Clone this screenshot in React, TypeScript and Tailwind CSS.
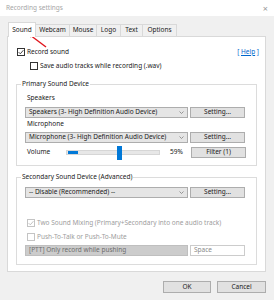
import React from "react";

function Check({ checked, disabled }: { checked?: boolean; disabled?: boolean }) {
  const c = disabled ? "#bcbcbc" : "#333333";
  return (
    <span
      className={`flex h-[8px] w-[8px] shrink-0 items-center justify-center border bg-white ${
        disabled ? "border-[#c4c4c4]" : "border-[#333333]"
      }`}
    >
      {checked && (
        <svg width="6" height="6" viewBox="0 0 6 6">
          <path d="M0.6 3.1 L2.3 4.8 L5.4 1.2" fill="none" stroke={c} strokeWidth="0.9" />
        </svg>
      )}
    </span>
  );
}

function Combo({ text, disabled }: { text: string; disabled?: boolean }) {
  return (
    <div
      className={`flex h-[11px] w-[163px] items-center justify-between border pl-[3px] pr-[3px] ${
        disabled ? "border-[#bfbfbf] bg-[#cccccc] text-[#6d6d6d]" : "border-[#adadad] bg-[#e5e5e5]"
      }`}
    >
      <span className="whitespace-nowrap leading-none">{text}</span>
      {!disabled && (
        <svg width="5" height="3" viewBox="0 0 5 3">
          <path d="M0.5 0.5 L2.5 2.5 L4.5 0.5" fill="none" stroke="#808080" strokeWidth="0.8" />
        </svg>
      )}
    </div>
  );
}

function Btn({ text, w = "w-[55px]" }: { text: string; w?: string }) {
  return (
    <div
      className={`flex h-[11px] ${w} items-center justify-center border border-[#adadad] bg-[#e1e1e1] leading-none`}
    >
      {text}
    </div>
  );
}

function Tab({ label, w, active }: { label: string; w: string; active?: boolean }) {
  return active ? (
    <div
      className={`relative z-10 -mb-px flex h-[15px] ${w} items-center justify-center border border-b-0 border-[#d9d9d9] bg-white leading-none`}
    >
      {label}
    </div>
  ) : (
    <div
      className={`flex h-[12px] ${w} items-center justify-center border border-l-0 border-b-0 border-[#d9d9d9] bg-[#f0f0f0] leading-none`}
    >
      {label}
    </div>
  );
}

export default function App() {
  return (
    <div className="relative flex h-[300px] w-[274px] flex-col overflow-hidden bg-[#f0f0f0] font-['Noto_Sans',sans-serif] text-[6.5px] text-[#1a1a1a]">
      {/* Title bar */}
      <div className="flex h-[16px] items-center justify-between bg-white pl-[6px] pr-[6px] text-[#a6a6a6]">
        <span className="leading-none">Recording settings</span>
        <span className="text-[9px] leading-none text-[#9a9a9a]">×</span>
      </div>

      <div className="flex flex-col px-[7px] pt-[6px]">
        {/* Tabs */}
        <div className="flex h-[14px] items-end pl-[1px]">
          <Tab label="Sound" w="w-[28px]" active />
          <Tab label="Webcam" w="w-[34px]" />
          <Tab label="Mouse" w="w-[27px]" />
          <Tab label="Logo" w="w-[24px]" />
          <Tab label="Text" w="w-[22px]" />
          <Tab label="Options" w="w-[34px]" />
        </div>

        {/* Panel */}
        <div className="flex h-[236px] w-[259px] flex-col border border-[#d9d9d9] bg-white">
          <div className="mt-[10px] flex h-[10px] items-center justify-between pl-[9px] pr-[6px]">
            <div className="flex items-center gap-[2px]">
              <Check checked />
              <span className="leading-none">Record sound</span>
            </div>
            <span className="leading-none text-[#0066cc]">
              [ <span className="underline">Help</span> ]
            </span>
          </div>

          <div className="mt-[4px] flex h-[10px] items-center gap-[2px] pl-[22px]">
            <Check />
            <span className="leading-none">Save audio tracks while recording (.wav)</span>
          </div>

          {/* Primary group */}
          <div className="ml-[8px] mt-[13px] flex h-[82px] w-[241px] flex-col border border-[#dcdcdc]">
            <div className="-mt-[5px] ml-[4px] flex h-[9px] w-fit items-center bg-white px-[1px] leading-none">
              Primary Sound Device
            </div>
            <div className="ml-[10px] mt-[5px] flex h-[9px] items-center leading-none">Speakers</div>
            <div className="ml-[8px] mt-[4px] flex gap-[2px]">
              <Combo text="Speakers (3- High Definition Audio Device)" />
              <Btn text="Setting..." />
            </div>
            <div className="ml-[10px] mt-[2px] flex h-[9px] items-center leading-none">Microphone</div>
            <div className="ml-[8px] mt-[3px] flex gap-[2px]">
              <Combo text="Microphone (3- High Definition Audio Device)" />
              <Btn text="Setting..." />
            </div>
            <div className="ml-[8px] mt-[4px] flex h-[11px] items-center">
              <span className="ml-[2px] w-[39px] leading-none">Volume</span>
              {/* slider */}
              <div className="relative flex h-[14px] w-[94px] items-center">
                <div className="flex h-[5px] w-full items-center border border-[#d6d6d6] bg-[#e7e7e7] pl-[1px]">
                  <div className="h-[3px] w-[10px] bg-[#0078d7]" />
                </div>
                <div className="absolute left-[51px] top-0 h-[14px] w-[5px] bg-[#0078d7]" />
              </div>
              <span className="ml-[10px] w-[21px] leading-none">59%</span>
              <Btn text="Filter (1)" />
            </div>
          </div>

          {/* Secondary group */}
          <div className="ml-[8px] mt-[11px] flex h-[88px] w-[241px] flex-col border border-[#dcdcdc]">
            <div className="-mt-[5px] ml-[4px] flex h-[9px] w-fit items-center bg-white px-[1px] leading-none">
              Secondary Sound Device (Advanced)
            </div>
            <div className="ml-[8px] mt-[5px] flex gap-[2px]">
              <Combo text="-- Disable (Recommended) --" />
              <Btn text="Setting..." />
            </div>
            <div className="ml-[10px] mt-[20px] flex h-[10px] items-center gap-[2px] text-[#9d9d9d]">
              <Check checked disabled />
              <span className="leading-none">Two Sound Mixing (Primary+Secondary into one audio track)</span>
            </div>
            <div className="ml-[10px] mt-[4px] flex h-[10px] items-center gap-[2px] text-[#9d9d9d]">
              <Check disabled />
              <span className="leading-none">Push-To-Talk or Push-To-Mute</span>
            </div>
            <div className="ml-[8px] mt-[3px] flex gap-[2px]">
              <Combo text="[PTT] Only record while pushing" disabled />
              <div className="flex h-[11px] w-[55px] items-center border border-[#cccccc] bg-white pl-[3px] leading-none text-[#8a8a8a]">
                Space
              </div>
            </div>
          </div>
        </div>
      </div>

      {/* Bottom buttons */}
      <div className="mt-[9px] flex justify-end gap-[6px] pr-[8px]">
        <div className="flex h-[12px] w-[48px] items-center justify-center border border-[#adadad] bg-[#e1e1e1] leading-none">
          OK
        </div>
        <div className="flex h-[12px] w-[49px] items-center justify-center border border-[#adadad] bg-[#e1e1e1] leading-none">
          Cancel
        </div>
      </div>

      {/* Red annotation arrow */}
      <svg className="absolute left-0 top-0" width="274" height="300" viewBox="0 0 274 300">
        <line x1="46" y1="47" x2="30" y2="35" stroke="#e0131b" strokeWidth="1.4" />
        <path d="M27 32.5 L33.5 34.2 L30.6 37.6 Z" fill="#e0131b" />
      </svg>
    </div>
  );
}
